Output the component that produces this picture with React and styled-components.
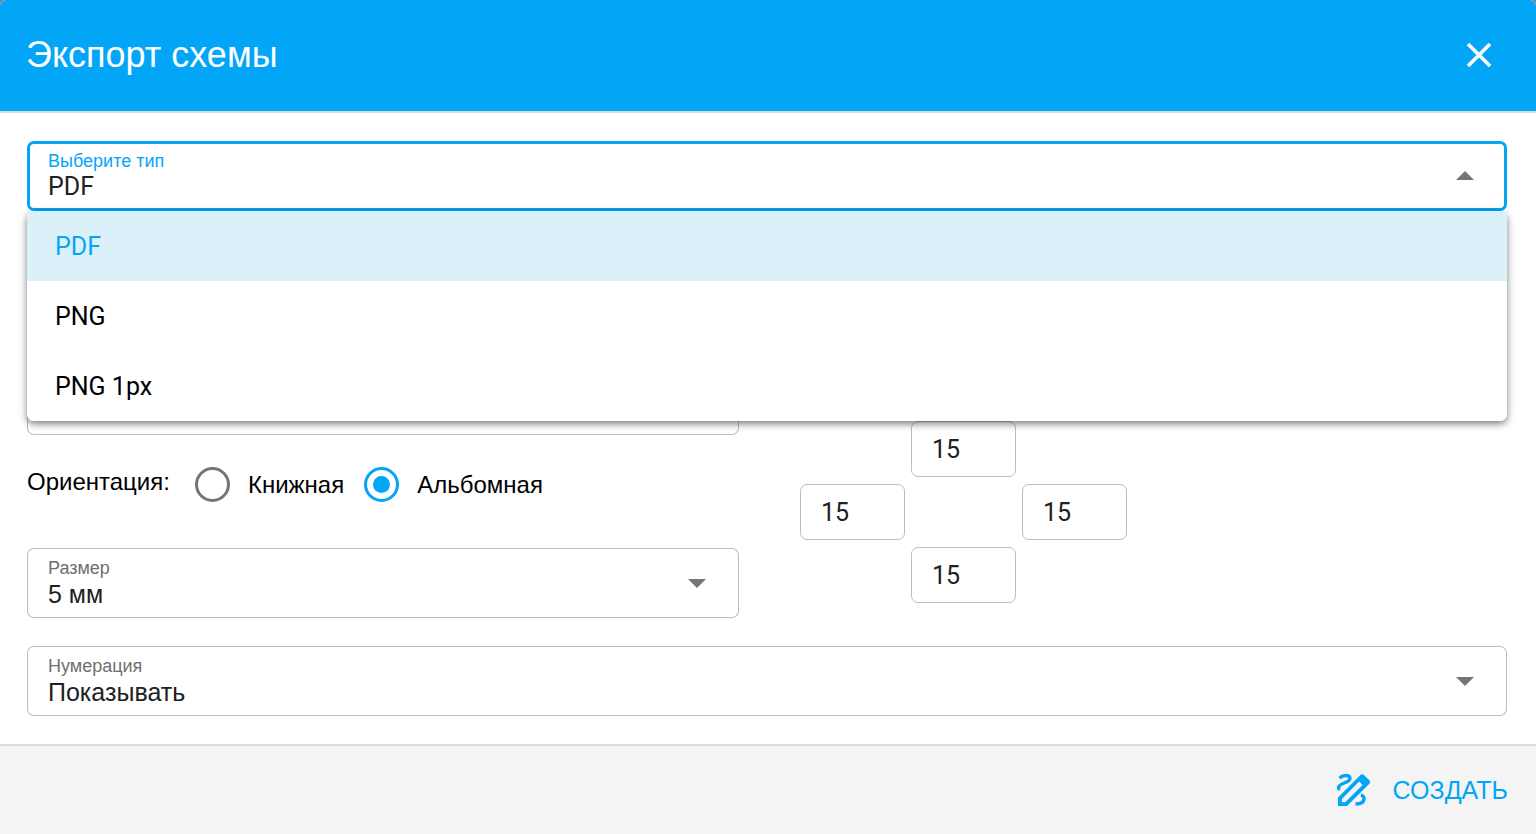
import React, { useState } from "react";
import styled, { createGlobalStyle } from "styled-components";

const COLORS = {
	primary: "#03a5f7",
	selected: "#dcf0fa",
	line: "#dddddd",
	outline: "#bdbdbd",
	muted: "#6f6f6f",
	text: "#212121",
	footer: "#f4f4f4",
};

const FONTS = {
	latin: `Roboto, "Liberation Sans", sans-serif`,
	cyrillic: `"Liberation Sans", Arial, sans-serif`,
};

const TYPES = ["PDF", "PNG", "PNG 1px"];

const SelectField = ({ id, label, options, value, onChange, open, latin, children }) => (
	<Field $open={open}>
		<FieldText>
			<FieldLabel htmlFor={id} $open={open}>
				{label}
			</FieldLabel>
			<Select id={id} value={value} onChange={onChange} $latin={latin}>
				{options.map((option) => (
					<option key={option}>{option}</option>
				))}
			</Select>
		</FieldText>
		<Arrow viewBox="0 0 18 10" $open={open} aria-hidden="true">
			<path d="M0 1h18L9 10z" />
		</Arrow>
		{children}
	</Field>
);

const App = () => {
	const [type, setType] = useState("PDF");
	const [open, setOpen] = useState(true);
	const [size, setSize] = useState("5 мм");
	const [numbering, setNumbering] = useState("Показывать");
	const [orientation, setOrientation] = useState("landscape");
	const [margins, setMargins] = useState({ top: 15, left: 15, right: 15, bottom: 15 });

	const pickType = (option) => {
		setType(option);
		setOpen(false);
	};

	return (
		<>
			<GlobalStyle />
			<Dialog role="dialog" aria-labelledby="title">
				<Header>
					<Title id="title">Экспорт схемы</Title>
					<CloseButton type="button" aria-label="Закрыть">
						<svg width="26" height="26" viewBox="0 0 26 26" aria-hidden="true">
							<path d="M2 2l22 22M24 2L2 24" stroke="currentColor" strokeWidth="3.6" />
						</svg>
					</CloseButton>
				</Header>

				<Body>
					<SelectField
						id="type"
						label="Выберите тип"
						options={TYPES}
						value={type}
						onChange={(e) => pickType(e.target.value)}
						open={open}
						latin>
						{open && (
							<Menu role="listbox" aria-label="Тип">
								{TYPES.map((option) => (
									<MenuItem
										key={option}
										type="button"
										role="option"
										aria-selected={option === type}
										$selected={option === type}
										onClick={() => pickType(option)}>
										{option}
									</MenuItem>
								))}
							</Menu>
						)}
					</SelectField>

					<NameInput type="text" aria-label="Имя файла" />

					<Columns>
						<div>
							<Field>
								<Select aria-label="Формат" />
							</Field>
							<Orientation>
								<Legend id="orientation">Ориентация:</Legend>
								<RadioGroup role="radiogroup" aria-labelledby="orientation">
									<RadioLabel>
										<Radio
											name="orientation"
											checked={orientation === "portrait"}
											onChange={() => setOrientation("portrait")}
										/>
										Книжная
									</RadioLabel>
									<RadioLabel>
										<Radio
											name="orientation"
											checked={orientation === "landscape"}
											onChange={() => setOrientation("landscape")}
										/>
										Альбомная
									</RadioLabel>
								</RadioGroup>
							</Orientation>
							<SelectField
								id="size"
								label="Размер"
								options={["5 мм"]}
								value={size}
								onChange={(e) => setSize(e.target.value)}
							/>
						</div>
						<Margins>
							{Object.keys(margins).map((side) => (
								<MarginInput
									key={side}
									aria-label={side}
									$side={side}
									value={margins[side]}
									onChange={(e) => setMargins({ ...margins, [side]: e.target.value })}
								/>
							))}
						</Margins>
					</Columns>

					<SelectField
						id="numbering"
						label="Нумерация"
						options={["Показывать"]}
						value={numbering}
						onChange={(e) => setNumbering(e.target.value)}
					/>
				</Body>

				<Footer>
					<CreateButton type="button">
						<svg width="34" height="34" viewBox="0 0 34 34" aria-hidden="true">
							<path
								d="M1 33V24.5L23.2 2.2q2-2 4 0l4.9 4.9q2 2 0 4L10 33zM4.8 29.3H8.2L25.6 12 22.2 8.6 4.8 26z"
								fill="currentColor"
								fillRule="evenodd"
							/>
							<path
								d="M2.5 5C6 1.8 13 1.2 13 5.5C13 10 1.6 10 1.6 14.5Q1.6 16 3 16.6M18.5 31C24.5 31 27 28.5 27 25.5Q27 23 24 21.8"
								fill="none"
								stroke="currentColor"
								strokeWidth="3.4"
							/>
						</svg>
						СОЗДАТЬ
					</CreateButton>
				</Footer>
			</Dialog>
		</>
	);
};

const GlobalStyle = createGlobalStyle`
	* {
		box-sizing: border-box;
	}

	body {
		margin: 0;
		background-color: #808080;
	}

	button, input, select {
		font: inherit;
	}
`;

const Dialog = styled.div`
	min-height: 100vh;
	display: flex;
	flex-direction: column;
	background-color: white;
	border-radius: 6px 6px 0 0;
	overflow: hidden;
	font-family: ${FONTS.cyrillic};
	font-size: 25px;
	color: black;
`;

const Header = styled.header`
	display: flex;
	align-items: center;
	justify-content: space-between;
	height: 113px;
	padding: 0 44px 2px 26px;
	background-color: ${COLORS.primary};
	border-bottom: 2px solid ${COLORS.line};
	color: white;
`;

const Title = styled.h1`
	margin: 0;
	font-size: 36px;
	font-weight: 400;
	line-height: 40px;
`;

const CloseButton = styled.button`
	display: flex;
	padding: 0;
	border: none;
	background: none;
	color: inherit;
	cursor: pointer;
`;

const Body = styled.main`
	flex: 1;
	display: flex;
	flex-direction: column;
	gap: 28px;
	padding: 28px 29px 28px 27px;
`;

const Field = styled.div`
	position: relative;
	display: flex;
	align-items: center;
	height: 70px;
	padding: 0 33px 0 20px;
	border-radius: 7px;
	box-shadow: inset 0 0 0 ${(props) => (props.$open ? `3px ${COLORS.primary}` : `1px ${COLORS.outline}`)};
`;

const FieldText = styled.div`
	flex: 1;
	display: flex;
	flex-direction: column;
	padding-left: 1px;
`;

const FieldLabel = styled.label`
	font-size: 18px;
	line-height: 22px;
	color: ${(props) => (props.$open ? COLORS.primary : COLORS.muted)};
`;

const Select = styled.select`
	appearance: none;
	width: 100%;
	padding: 0;
	border: none;
	outline: none;
	background: none;
	color: ${COLORS.text};
	font-family: ${(props) => (props.$latin ? FONTS.latin : FONTS.cyrillic)};
	line-height: 30px;
`;

const Arrow = styled.svg`
	width: 18px;
	height: 10px;
	fill: #757575;
	transform: ${(props) => (props.$open ? "rotate(180deg)" : "none")};
`;

const Menu = styled.div`
	position: absolute;
	z-index: 1;
	top: 100%;
	left: 0;
	right: 0;
	display: flex;
	flex-direction: column;
	overflow: hidden;
	border-radius: 7px;
	background-color: white;
	box-shadow: 0 3px 6px rgba(0, 0, 0, 0.4), 0 2px 12px rgba(0, 0, 0, 0.15);
`;

const MenuItem = styled.button`
	height: 70px;
	padding: 0 28px;
	border: none;
	background-color: ${(props) => (props.$selected ? COLORS.selected : "white")};
	color: ${(props) => (props.$selected ? COLORS.primary : "black")};
	font-family: ${FONTS.latin};
	text-align: left;
	cursor: pointer;
`;

const NameInput = styled.input`
	height: 70px;
	padding: 0 21px;
	border: 1px solid ${COLORS.outline};
	border-radius: 7px;
`;

const Columns = styled.div`
	display: grid;
	grid-template-columns: 1fr 1fr;
	gap: 56px;
	margin-top: 28px;
`;

const Orientation = styled.div`
	display: flex;
	align-items: flex-start;
	gap: 25px;
	height: 113px;
	padding-top: 32px;
	font-size: 24px;
`;

const Legend = styled.span`
	line-height: 30px;
`;

const RadioGroup = styled.div`
	display: flex;
	gap: 20px;
`;

const RadioLabel = styled.label`
	display: flex;
	align-items: center;
	gap: 18px;
	line-height: 35px;
`;

const Radio = styled.input.attrs({ type: "radio" })`
	appearance: none;
	display: grid;
	place-items: center;
	width: 35px;
	height: 35px;
	margin: 0;
	border: 3px solid #757575;
	border-radius: 50%;

	&:checked {
		border-color: ${COLORS.primary};
	}

	&:checked::before {
		content: "";
		width: 17px;
		height: 17px;
		border-radius: 50%;
		background-color: ${COLORS.primary};
	}
`;

const Margins = styled.div`
	display: grid;
	grid-template:
		". top ." 56px
		"left . right" 56px
		". bottom ." 56px / 105px 105px 105px;
	gap: 7px 6px;
	align-self: end;
	padding: 0 0 15px 5px;
`;

const MarginInput = styled.input`
	grid-area: ${(props) => props.$side};
	width: 100%;
	min-width: 0;
	padding: 0 20px;
	border: 1px solid ${COLORS.outline};
	border-radius: 7px;
	background: none;
	color: ${COLORS.text};
	font-family: ${FONTS.latin};
`;

const Footer = styled.footer`
	display: flex;
	align-items: center;
	justify-content: flex-end;
	height: 90px;
	padding: 0 28px;
	border-top: 2px solid ${COLORS.line};
	background-color: ${COLORS.footer};
`;

const CreateButton = styled.button`
	display: flex;
	align-items: center;
	gap: 22px;
	padding: 0;
	border: none;
	background: none;
	color: ${COLORS.primary};
	cursor: pointer;
`;

export default App;
